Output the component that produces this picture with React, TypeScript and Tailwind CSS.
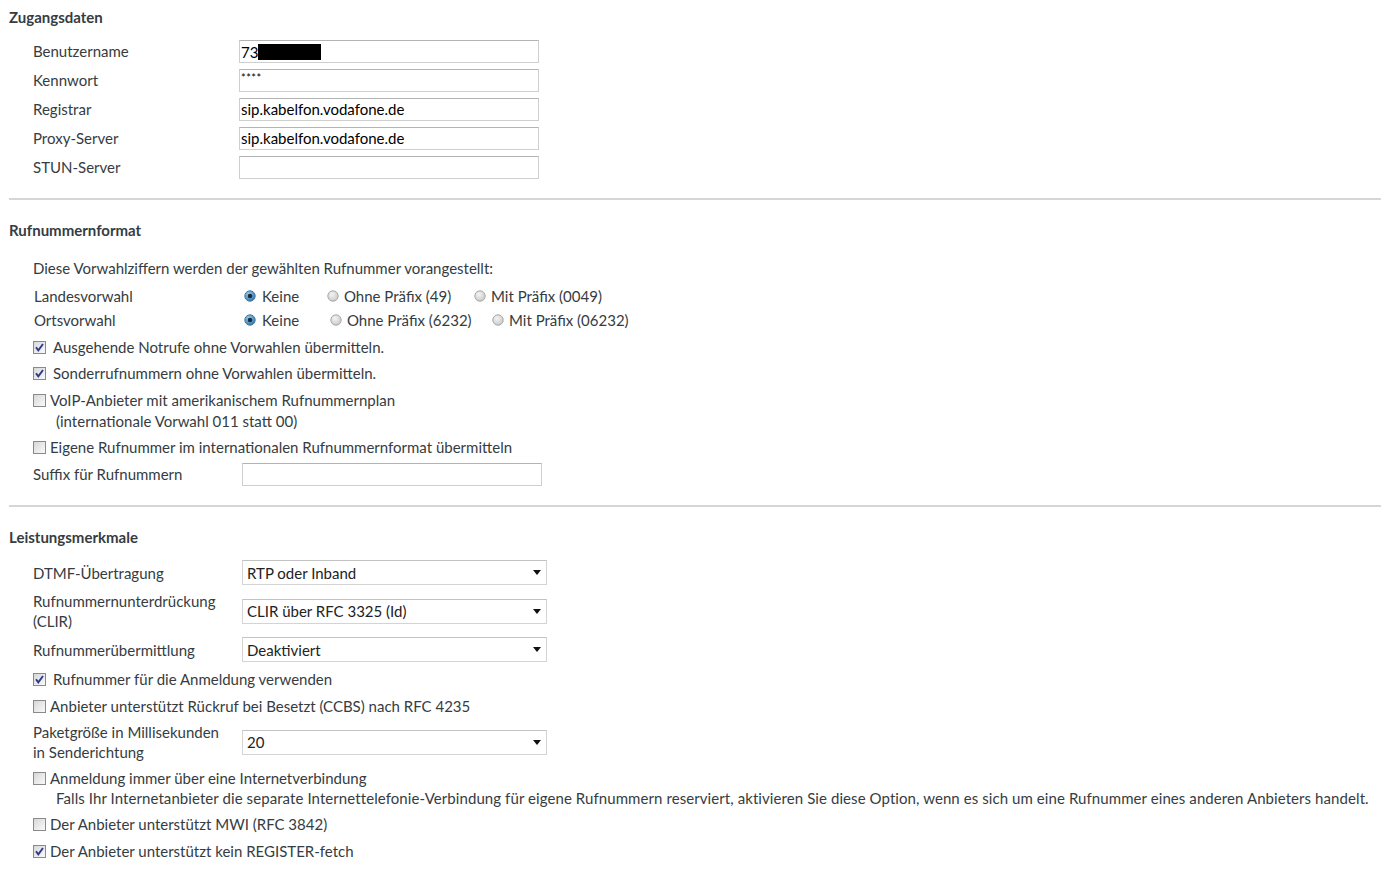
import React from 'react';

const FONT = { fontFamily: 'Lato, "Noto Sans", sans-serif' };

function CheckBox({ checked }: { checked?: boolean }) {
  return (
    <svg width="13" height="13" viewBox="0 0 13 13" className="shrink-0">
      <defs>
        <linearGradient id="cbg" x1="0" y1="0" x2="1" y2="1">
          <stop offset="0" stopColor="#d6d6d6" />
          <stop offset="1" stopColor="#fbfbfb" />
        </linearGradient>
      </defs>
      <rect x="0.5" y="0.5" width="12" height="12" fill="url(#cbg)" stroke="#8a8a8a" />
      {checked && <path d="M3 6.3 L5.3 9.4 L10 3" fill="none" stroke="#2e3a86" strokeWidth="1.9" />}
    </svg>
  );
}

function Radio({ checked }: { checked?: boolean }) {
  return (
    <svg width="12" height="12" viewBox="0 0 12 12" className="shrink-0">
      <defs>
        <radialGradient id="rg" cx="0.4" cy="0.35" r="0.7">
          <stop offset="0" stopColor="#f4f4f4" />
          <stop offset="1" stopColor="#c8c8c8" />
        </radialGradient>
        <radialGradient id="rb" cx="0.4" cy="0.35" r="0.7">
          <stop offset="0" stopColor="#9fd3f2" />
          <stop offset="1" stopColor="#2c6fa6" />
        </radialGradient>
      </defs>
      <circle cx="6" cy="6" r="5.2" fill={checked ? 'url(#rb)' : 'url(#rg)'} stroke={checked ? '#4a7ca3' : '#a8a8a8'} />
      {checked && <circle cx="6" cy="6" r="2.3" fill="#1b2b3c" />}
    </svg>
  );
}

function TextInput({ children }: { children?: React.ReactNode }) {
  return (
    <div className="w-[300px] h-[23px] border border-[#cfcfcf] border-t-[#b4b4b4] bg-white flex items-center pl-[1px] text-black text-[15px]">
      {children}
    </div>
  );
}

function Select({ value }: { value: string }) {
  return (
    <div className="w-[305px] h-[25px] border border-[#d4d4d4] border-t-[#c2c2c2] bg-white flex items-center justify-between pl-[4px] pr-[5px] text-[#222] text-[15px]">
      <span>{value}</span>
      <svg width="8" height="5" viewBox="0 0 8 5"><path d="M0 0 H8 L4 5 Z" fill="#111" /></svg>
    </div>
  );
}

function Heading({ children }: { children: React.ReactNode }) {
  return <h2 className="text-[15px] font-bold leading-5 pl-[9px]">{children}</h2>;
}

function Check({ checked, wide, label, className = '' }: { checked?: boolean; wide?: boolean; label: string; className?: string }) {
  return (
    <div className={`flex items-center h-5 pl-[33px] ${className}`}>
      <CheckBox checked={checked} />
      <span className={wide ? 'ml-[7px]' : 'ml-[4px]'}>{label}</span>
    </div>
  );
}

const ACCESS = [
  { label: 'Benutzername', value: 'user' },
  { label: 'Kennwort', value: 'pw' },
  { label: 'Registrar', value: 'sip.kabelfon.vodafone.de' },
  { label: 'Proxy-Server', value: 'sip.kabelfon.vodafone.de' },
  { label: 'STUN-Server', value: '' },
];

export default function App() {
  return (
    <div className="min-h-screen bg-white text-[#353c42] text-[15px] leading-5" style={FONT}>
      <div className="pt-[7px]">
        <Heading>Zugangsdaten</Heading>
        <div className="mt-[13px] flex flex-col gap-[6px]">
          {ACCESS.map(row => (
            <div key={row.label} className="flex items-center pl-[33px]">
              <span className="w-[206px] -mt-[1px]">{row.label}</span>
              <TextInput>
                {row.value === 'user' && (
                  <>
                    <span>73</span>
                    <span className="inline-block w-[63px] h-[16px] bg-black" />
                  </>
                )}
                {row.value === 'pw' && <span className="text-[11px] leading-none -mt-[6px] tracking-[0.5px]">****</span>}
                {row.value !== 'user' && row.value !== 'pw' && <span className="-mt-[1px]">{row.value}</span>}
              </TextInput>
            </div>
          ))}
        </div>
      </div>

      <div className="ml-[9px] mt-[19px] border-t-2 border-[#d6d6d6]" />

      <div className="mt-[20px]">
        <Heading>Rufnummernformat</Heading>
        <p className="mt-[18px] pl-[33px]">Diese Vorwahlziffern werden der gewählten Rufnummer vorangestellt:</p>
        <div className="mt-[6px] pl-[34px]">
          <div className="flex items-center h-6">
            <span className="w-[210px]">Landesvorwahl</span>
            <Radio checked />
            <span className="ml-[6px] w-[65px]">Keine</span>
            <Radio />
            <span className="ml-[5px] w-[130px]">Ohne Präfix (49)</span>
            <Radio />
            <span className="ml-[5px]">Mit Präfix (0049)</span>
          </div>
          <div className="flex items-center h-6">
            <span className="w-[210px]">Ortsvorwahl</span>
            <Radio checked />
            <span className="ml-[6px] w-[68px]">Keine</span>
            <Radio />
            <span className="ml-[5px] w-[145px]">Ohne Präfix (6232)</span>
            <Radio />
            <span className="ml-[5px]">Mit Präfix (06232)</span>
          </div>
        </div>
        <Check checked wide label="Ausgehende Notrufe ohne Vorwahlen übermitteln." className="mt-[5px]" />
        <Check checked wide label="Sonderrufnummern ohne Vorwahlen übermitteln." className="mt-[6px]" />
        <Check label="VoIP-Anbieter mit amerikanischem Rufnummernplan" className="mt-[7px]" />
        <p className="pl-[56px] mt-[1px]">(internationale Vorwahl 011 statt 00)</p>
        <Check label="Eigene Rufnummer im internationalen Rufnummernformat übermitteln" className="mt-[6px]" />
        <div className="flex items-center pl-[33px] mt-[6px]">
          <span className="w-[209px] -mt-[1px]">Suffix für Rufnummern</span>
          <TextInput />
        </div>
      </div>

      <div className="ml-[9px] mt-[19px] border-t-2 border-[#d6d6d6]" />

      <div className="mt-[20px] pb-4">
        <Heading>Leistungsmerkmale</Heading>
        <div className="flex items-center pl-[33px] mt-[13px]">
          <span className="w-[209px]">DTMF-Übertragung</span>
          <Select value="RTP oder Inband" />
        </div>
        <div className="flex items-center pl-[33px] mt-[6px]">
          <span className="w-[209px]">Rufnummernunterdrückung<br />(CLIR)</span>
          <Select value="CLIR über RFC 3325 (Id)" />
        </div>
        <div className="flex items-center pl-[33px] mt-[6px]">
          <span className="w-[209px]">Rufnummerübermittlung</span>
          <Select value="Deaktiviert" />
        </div>
        <Check checked wide label="Rufnummer für die Anmeldung verwenden" className="mt-[7px]" />
        <Check label="Anbieter unterstützt Rückruf bei Besetzt (CCBS) nach RFC 4235" className="mt-[7px]" />
        <div className="flex items-center pl-[33px] mt-[6px]">
          <span className="w-[209px]">Paketgröße in Millisekunden<br />in Senderichtung</span>
          <Select value="20" />
        </div>
        <Check label="Anmeldung immer über eine Internetverbindung" className="mt-[6px]" />
        <p className="pl-[56px] whitespace-nowrap tracking-[0.08px]">
          Falls Ihr Internetanbieter die separate Internettelefonie-Verbindung für eigene Rufnummern reserviert, aktivieren Sie diese Option, wenn es sich um eine Rufnummer eines anderen Anbieters handelt.
        </p>
        <Check label="Der Anbieter unterstützt MWI (RFC 3842)" className="mt-[6px]" />
        <Check checked label="Der Anbieter unterstützt kein REGISTER-fetch" className="mt-[7px]" />
      </div>
    </div>
  );
}
